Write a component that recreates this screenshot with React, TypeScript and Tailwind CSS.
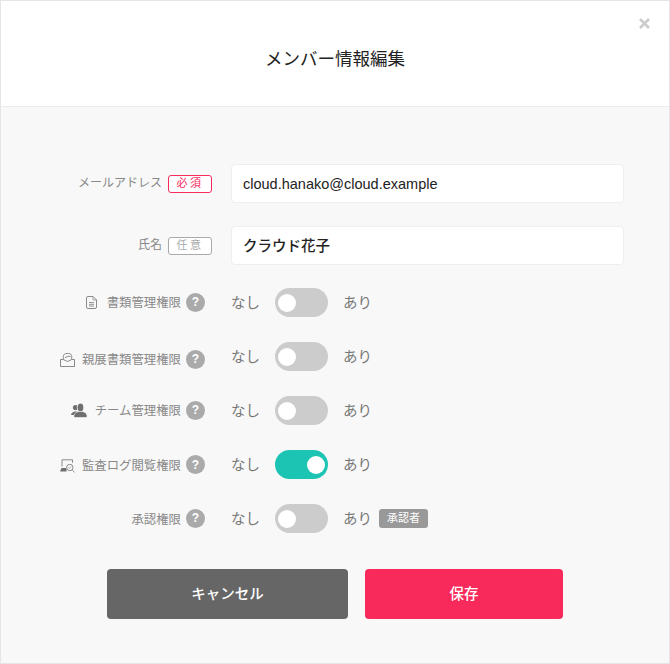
import React from 'react';

const font = { fontFamily: '"Liberation Sans", "Noto Sans CJK JP", sans-serif' };

function DocIcon() {
  return (
    <svg width="11" height="13" viewBox="0 0 11 13" fill="none" stroke="#8a8a8a" strokeWidth="1">
      <path d="M2 .5h5L10.500 4v7a1.500 1.500 0 0 1-1.500 1.500H2A1.500 1.500 0 0 1 .5 11V2A1.500 1.500 0 0 1 2 .5z" />
      <path d="M7 .5V4h3.500" strokeWidth="0.7" />
      <path d="M3 6.500h5M3 8.300h5M3 10h5" strokeWidth="0.9" />
    </svg>
  );
}

function EnvelopeIcon() {
  return (
    <svg width="15" height="14" viewBox="0 0 15 14" fill="none" stroke="#8a8a8a" strokeWidth="1">
      <path d="M.5 6.500h2.800l4.200 2 4.200-2h2.800v7H.5z" />
      <path d="M3.300 6.500V3.500C3.300 1.500 5 .5 7 .5h1.500c2 0 3.200 1.200 3.200 3v3" />
      <path d="M5 5c1-1.500 3.500-2 5.500-1.500" fill="none" />
    </svg>
  );
}

function TeamIcon() {
  return (
    <svg width="16" height="15" viewBox="0 0 16 15" fill="#6f6f6f">
      <circle cx="4.500" cy="4.500" r="2.600" />
      <path d="M0 12c0-2 2-3 3.500-3.500h3l-1.500 3.500H0z" />
      <ellipse cx="9.500" cy="4.500" rx="3.200" ry="4.300" stroke="#f8f8f8" strokeWidth="0.8" />
      <path d="M7.500 8.500h4c1.500.6 4.500 1.500 4.500 4v2H3v-2c0-2.500 3-3.400 4.500-4z" stroke="#f8f8f8" strokeWidth="0.6" />
    </svg>
  );
}

function AuditIcon() {
  return (
    <svg width="15" height="14" viewBox="0 0 15 14" fill="none" stroke="#8a8a8a" strokeWidth="1">
      <path d="M2 7.500V.8h10.500v3" />
      <path d="M0 12.500 1.500 9h5v3.500z" fill="#6f6f6f" stroke="none" />
      <circle cx="9.800" cy="8.500" r="3.200" />
      <path d="m12.200 10.900 2.300 2.300" />
      <path d="M8.500 8.500l1 1 1.500-2" strokeWidth="0.7" />
    </svg>
  );
}

function Badge({ required }: { required: boolean }) {
  return (
    <span
      className={`flex h-[18px] w-[44px] items-center justify-center rounded-[3px] border-[1.5px] bg-white text-[11px] tracking-[2.5px] ${
        required ? 'border-[#f72a5b] text-[#f72a5b]' : 'border-[#aaaaaa] text-[#aaaaaa]'
      }`}
    >
      {required ? '必須' : '任意'}
    </span>
  );
}

function Toggle({ on }: { on?: boolean }) {
  return (
    <span
      className={`flex h-[29px] w-[53px] items-center rounded-full px-[3px] ${
        on ? 'justify-end bg-[#1cc4b4]' : 'justify-start bg-[#cccccc]'
      }`}
    >
      <span className="h-[18px] w-[18px] rounded-full bg-white" />
    </span>
  );
}

const permissions: { label: string; icon: React.ReactNode; on?: boolean; approver?: boolean; iconGap: string; textOffset: string; helpOffset: string }[] = [
  { label: '書類管理権限', icon: <DocIcon />, iconGap: 'gap-[10px]', textOffset: 'mt-[1px]', helpOffset: 'mt-0' },
  { label: '親展書類管理権限', icon: <EnvelopeIcon />, iconGap: 'gap-[7px]', textOffset: 'mt-[7px]', helpOffset: 'mt-[6px]' },
  { label: 'チーム管理権限', icon: <TeamIcon />, iconGap: 'gap-[8px]', textOffset: 'mt-[1px]', helpOffset: 'mt-0' },
  { label: '監査ログ閲覧権限', icon: <AuditIcon />, on: true, iconGap: 'gap-[7px]', textOffset: 'mt-[3px]', helpOffset: 'mt-[1px]' },
  { label: '承認権限', icon: null, approver: true, iconGap: 'gap-0', textOffset: 'mt-[3px]', helpOffset: 'mt-0' },
];

export default function App() {
  return (
    <div style={font} className="h-[664px] w-[670px] overflow-hidden border border-[#e5e5e5] bg-[#f8f8f8]">
      {/* ヘッダー */}
      <div className="relative flex h-[106px] items-center justify-center border-b border-[#ececec] bg-white">
        <h1 className="mt-[12px] text-[17.5px] text-[#222222]">メンバー情報編集</h1>
        <svg className="absolute right-[19px] top-[17px]" width="11" height="11" viewBox="0 0 11 11" stroke="#cccccc" strokeWidth="2.6">
          <path d="M1 1l9 9M10 1l-9 9" />
        </svg>
      </div>

      <div className="flex flex-col pt-[57px]">
        <div className="flex h-[39px] items-center">
          <div className="flex w-[211px] items-center justify-end gap-[6px]">
            <span className="mb-[1px] text-[12px] text-[#888888]">メールアドレス</span>
            <Badge required />
          </div>
          <div className="ml-[19px] flex h-[39px] w-[393px] items-center rounded-[4px] border border-[#eeeeee] bg-white pl-[11px] pt-[2px] text-[14.5px] text-[#222222]">
            cloud.hanako@cloud.example
          </div>
        </div>

        <div className="mt-[23px] flex h-[39px] items-center">
          <div className="flex w-[211px] items-center justify-end gap-[6px]">
            <span className="mb-[1px] text-[12px] text-[#888888]">氏名</span>
            <Badge required={false} />
          </div>
          <div className="ml-[19px] flex h-[39px] w-[393px] items-center rounded-[4px] border border-[#eeeeee] bg-white pl-[11px] pt-[2px] text-[14.5px] font-medium text-[#222222]">
            クラウド花子
          </div>
        </div>

        <div className="mt-[23px] flex flex-col gap-[25px]">
          {permissions.map((p) => (
            <div key={p.label} className="flex h-[29px] items-center">
              <div className="flex w-[204px] items-center justify-end gap-[5px]">
                <span className={`flex items-center ${p.iconGap} ${p.textOffset}`}>
                  {p.icon}
                  <span className="text-[12.4px] text-[#888888]">{p.label}</span>
                </span>
                <span className={`flex h-[19px] w-[19px] items-center justify-center rounded-full bg-[#aaaaaa] text-[12px] font-bold text-white ${p.helpOffset}`}>
                  ?
                </span>
              </div>
              <span className="ml-[26px] mt-[2px] text-[14.5px] text-[#777777]">なし</span>
              <span className="ml-[15px]">
                <Toggle on={p.on} />
              </span>
              <span className="ml-[15px] mt-[2px] text-[14.5px] text-[#777777]">あり</span>
              {p.approver && (
                <span className="ml-[7px] flex h-[19px] w-[49px] items-center justify-center rounded-[3px] bg-[#999999] text-[11px] text-white">
                  承認者
                </span>
              )}
            </div>
          ))}
        </div>

        <div className="ml-[106px] mt-[36px] flex gap-[17px]">
          <button className="h-[50px] w-[241px] rounded-[4px] bg-[#666666] pt-[2px] text-[14.5px] font-medium text-white">
            キャンセル
          </button>
          <button className="h-[50px] w-[198px] rounded-[4px] bg-[#f72a5b] pt-[2px] text-[14.5px] font-medium text-white">
            保存
          </button>
        </div>
      </div>
    </div>
  );
}
